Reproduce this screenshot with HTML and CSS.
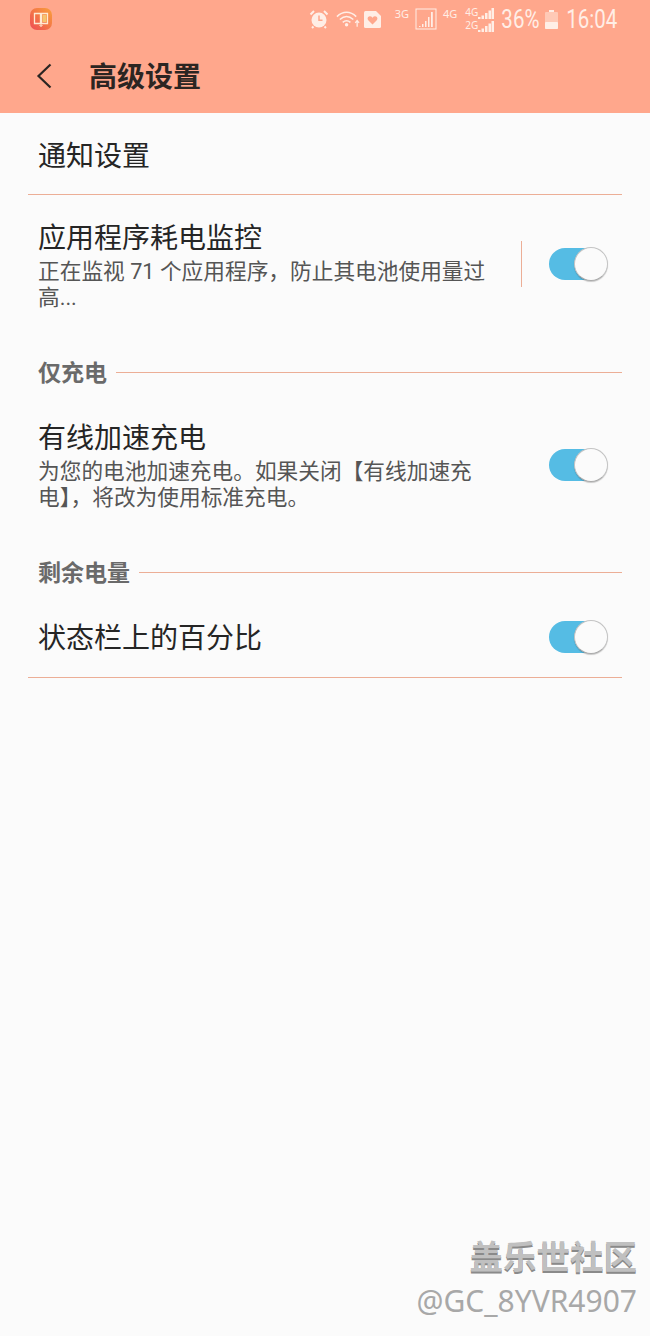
FILE: index.html
```html
<!DOCTYPE html>
<html lang="zh-CN">
<head>
    <meta charset="UTF-8">
    <meta name="viewport" content="width=device-width, initial-scale=1.0">
    <title>高级设置</title>
    <link rel="stylesheet" href="styles.css">
</head>
<body>

<header class="top">
    <div class="status-bar">
        <svg class="app-icon" width="22" height="22" viewBox="0 0 22 22">
            <defs>
                <linearGradient id="appGrad" x1="0" y1="1" x2="1" y2="0">
                    <stop offset="0" stop-color="#ee4b55"/>
                    <stop offset="1" stop-color="#f9a13a"/>
                </linearGradient>
            </defs>
            <rect width="22" height="22" rx="7" fill="url(#appGrad)"/>
            <path d="M4.500 5.500h6v10h-6zM11.500 5.500h6v10h-6z" fill="none" stroke="#ffe9d2" stroke-width="1.300"/>
            <path d="M12.500 7h4v7h-4z" fill="#f6c46e"/>
            <path d="M11 15v3.500M9.500 17l1.500 1.500 1.500-1.500" fill="none" stroke="#ffe9d2" stroke-width="1"/>
        </svg>
        <div class="status-right">
            <svg class="st-alarm" width="20" height="20" viewBox="0 0 20 20">
                <circle cx="10" cy="11" r="7.500" fill="#ffeee6"/>
                <path d="M1.500 5.500L5 2M18.500 5.500L15 2M4.500 17.500L3 19M15.500 17.500L17 19" stroke="#ffeee6" stroke-width="2" fill="none"/>
                <path d="M10 6.500v4.800h3.500" stroke="#ffa78c" stroke-width="1.500" fill="none"/>
            </svg>
            <svg class="st-wifi" width="25" height="20" viewBox="0 0 26 20">
                <path d="M1 7.500C7 1.500 15 1.500 21 7.500M4 10.500C8.500 6.500 13.500 6.500 18 10.500M7 13.500C9.500 11.500 12.500 11.500 15 13.500" stroke="#ffeee6" stroke-width="1.600" fill="none"/>
                <circle cx="11" cy="16" r="1.800" fill="#ffeee6"/>
                <path d="M22 18v-6M20 14l2-2.500 2 2.500" stroke="#ffeee6" stroke-width="1.300" fill="none"/>
            </svg>
            <svg class="st-sim" width="17" height="18" viewBox="0 0 17 18">
                <path d="M0 2.500Q0 1 1.500 1H12l5 5v10.500q0 1.500-1.500 1.500h-14Q0 18 0 16.500z" fill="#ffeee6"/>
                <path d="M8.500 14.500L4 10q-1.200-2.500 1-3.500 2-.6 3.500 1.300 1.500-1.900 3.500-1.300 2.200 1 1 3.500z" fill="#ffa78c"/>
            </svg>
            <span class="st-small st-3g">3G</span>
            <svg class="st-boxed" width="22" height="22" viewBox="0 0 22 22">
                <rect x="1" y="1" width="20" height="20" fill="none" stroke="#ffeee6" stroke-width="1"/>
                <path d="M4 18h1.500v1H4zM7 16h1.500v3H7zM10 13h1.500v6H10zM13 9h1.500v10H13zM16 4h1.800v15H16z" fill="#ffeee6"/>
            </svg>
            <span class="st-small st-4g">4G</span>
            <div class="st-dual">
                <div class="st-dual-row"><span>4G</span><svg width="16" height="11" viewBox="0 0 16 11"><path d="M0 9h2.500v2H0zM3.500 7.500h2.500V11H3.500zM7 5h2.500v6H7zM10.500 2.500H13V11h-2.500zM13.500 0H16v11h-2.500z" fill="#ffeee6"/></svg></div>
                <div class="st-dual-row"><span>2G</span><svg width="16" height="11" viewBox="0 0 16 11"><path d="M0 9h2.500v2H0zM3.500 7.500h2.500V11H3.500zM7 5h2.500v6H7zM10.500 2.500H13V11h-2.500zM13.500 0H16v11h-2.500z" fill="#ffeee6"/></svg></div>
            </div>
            <span class="st-pct">36%</span>
            <svg class="st-batt" width="13" height="19" viewBox="0 0 13 19">
                <path d="M4 0h5v2H4z" fill="#ffeee6"/>
                <rect x="0" y="2" width="13" height="17" rx="1" fill="#ffc9b6"/>
                <rect x="0" y="12" width="13" height="7" rx="1" fill="#ffeee6"/>
            </svg>
            <span class="st-time">16:04</span>
        </div>
    </div>
    <div class="app-bar">
        <svg class="back" width="16" height="26" viewBox="0 0 16 26">
            <path d="M14.500 1.500L2.500 13l12 11.500" fill="none" stroke="#2b2522" stroke-width="2.200"/>
        </svg>
        <h1>高级设置</h1>
    </div>
</header>

<main class="list">
    <div class="row row-plain row-first">
        <div class="row-title">通知设置</div>
    </div>

    <div class="row row-sub row-monitor">
        <div class="row-text">
            <div class="row-title">应用程序耗电监控</div>
            <div class="row-desc">正在监视 71 个应用程序，防止其电池使用量过高...</div>
        </div>
        <span class="vline"></span>
        <span class="switch"><span class="knob"></span></span>
    </div>

    <div class="section section-charge">
        <span class="section-name">仅充电</span>
        <span class="section-line"></span>
    </div>

    <div class="row row-sub row-wired">
        <div class="row-text">
            <div class="row-title">有线加速充电</div>
            <div class="row-desc">为您的电池加速充电。如果关闭【有线加速充电】，将改为使用标准充电。</div>
        </div>
        <span class="switch"><span class="knob"></span></span>
    </div>

    <div class="section section-battery">
        <span class="section-name">剩余电量</span>
        <span class="section-line"></span>
    </div>

    <div class="row row-plain row-percent">
        <div class="row-text">
            <div class="row-title">状态栏上的百分比</div>
        </div>
        <span class="switch"><span class="knob"></span></span>
    </div>
</main>

<div class="watermark">
    <div class="wm-name">盖乐世社区</div>
    <div class="wm-id">@GC_8YVR4907</div>
</div>

</body>
</html>
```

FILE: styles.css
```css
* {
    box-sizing: border-box;
}

html,
body {
    height: 100%;
}

body {
    position: relative;
    margin: 0;
    overflow: hidden;
    font-family: "Roboto", "Noto Sans CJK SC", sans-serif;
    background-color: #fbfbfb;
    color: #252525;
}

.top {
    height: 113px;
    background-color: #ffa78c;
}

.status-bar {
    display: flex;
    align-items: center;
    justify-content: space-between;
    height: 38px;
    padding: 0 33px 0 30px;
    color: #ffeee6;
}

.status-right {
    display: flex;
    align-items: center;
}

.st-wifi {
    margin-left: 7px;
}

.st-sim {
    margin-left: 3px;
}

.st-small {
    font-size: 11px;
    font-family: "Noto Sans", sans-serif;
}

.st-3g {
    margin: -11px 0 0 14px;
}

.st-boxed {
    margin-left: 6px;
}

.st-4g {
    margin: -11px 0 0 6px;
}

.st-dual {
    display: flex;
    flex-direction: column;
    margin-left: 8px;
}

.st-dual-row {
    display: flex;
    align-items: flex-end;
    height: 13px;
    font-size: 10px;
    font-family: "Noto Sans", sans-serif;
    line-height: 13px;
}

.st-pct,
.st-time {
    font-size: 25px;
    transform: scaleX(.82);
    transform-origin: right center;
}

.st-pct {
    margin-left: -1px;
}

.st-batt {
    margin-left: 5px;
}

.st-time {
    margin-left: -3px;
}

.app-bar {
    display: flex;
    align-items: center;
    height: 75px;
    padding-left: 36px;
}

h1 {
    margin: 5px 0 0 37px;
    font-size: 28px;
    font-weight: 700;
    line-height: 36px;
    color: #2b2522;
}

.row {
    display: flex;
    align-items: center;
    margin: 0 28px;
    padding: 0 15px 0 10px;
}

.row-plain {
    border-bottom: 1px solid #ecae96;
}

.row-first {
    height: 82px;
    padding-top: 7px;
}

.row-percent {
    height: 89px;
    padding-top: 8px;
}

.row-percent .row-text {
    margin-top: 4px;
}

.row-sub {
    align-items: flex-start;
}

.row-text {
    flex: 1;
    min-width: 0;
}

.row-title {
    font-size: 28px;
    line-height: 40px;
}

.row-desc {
    width: 452px;
    font-size: 21.700px;
    line-height: 26px;
    color: #555;
}

.row-monitor {
    height: 160px;
    padding-top: 24px;
}

.row-wired {
    height: 166px;
    padding-top: 30px;
}

.vline {
    flex: none;
    width: 1px;
    height: 46px;
    margin: 22px 27px 0 0;
    background-color: #ecae96;
}

.switch {
    position: relative;
    display: block;
    flex: none;
    width: 58px;
    height: 32px;
    border-radius: 16px;
    background-color: #55bce4;
}

.row-monitor .switch {
    margin-top: 29px;
}

.row-wired .switch {
    margin-top: 30px;
}

.knob {
    position: absolute;
    top: -1px;
    right: -1px;
    width: 34px;
    height: 34px;
    border: 1px solid #c4c4c4;
    border-bottom-color: #aaa;
    border-radius: 50%;
    background-color: #fbfbfb;
    box-shadow: 0 1px 1px rgba(0, 0, 0, 0.2);
}

.section {
    display: flex;
    align-items: center;
    height: 34px;
    margin: 0 28px;
    padding-left: 10px;
}

.section-name {
    margin-top: 3px;
    font-size: 23px;
    font-weight: 700;
    line-height: 30px;
    color: #6a6a6a;
}

.section-line {
    flex: 1;
    height: 1px;
    margin-left: 9px;
    background-color: #ecae96;
}

.watermark {
    position: absolute;
    right: 13px;
    bottom: 15px;
    text-align: right;
    color: #c0c0c0;
}

.wm-name {
    margin-bottom: 3px;
    font-size: 33.500px;
    font-weight: 700;
    line-height: 40px;
    text-shadow: 0 2px 0 #8a8a8a;
}

.wm-id {
    font-family: "Noto Sans", sans-serif;
    font-size: 30px;
    line-height: 40px;
    color: #a8a8a8;
}
```
